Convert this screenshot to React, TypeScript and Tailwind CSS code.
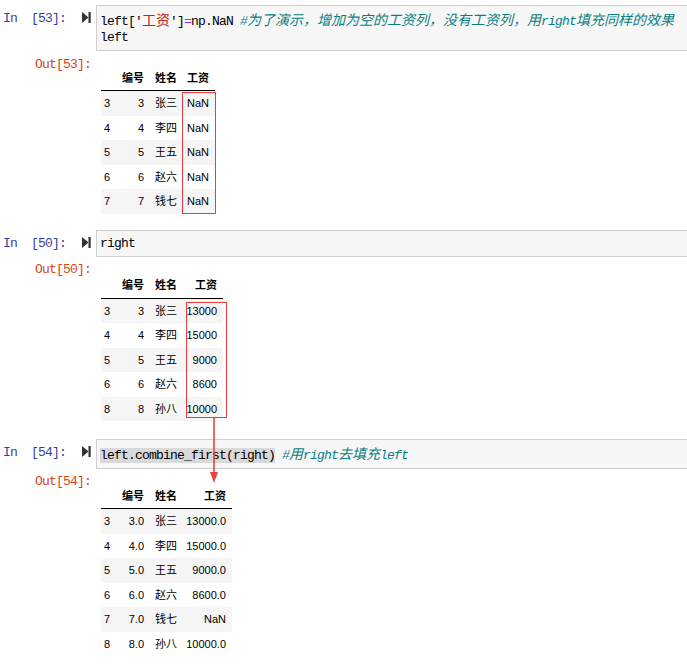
import React from "react";

const mono = { fontFamily: '"Liberation Mono", "Noto Sans CJK SC", monospace' };

// 运行按钮图标（三角 + 竖线）
const RunIcon = () => (
  <svg width="9" height="11" viewBox="0 0 9 11" className="mt-[7px] ml-[82px] shrink-0">
    <polygon points="0,0 6.5,5.5 0,11" fill="#333" />
    <rect x="6.5" y="0" width="2.2" height="11" fill="#333" />
  </svg>
);

const Cjk = ({ children }: { children: React.ReactNode }) => (
  <span className="text-[14px] tracking-normal" style={{ fontFamily: '"Noto Sans CJK SC", sans-serif' }}>
    {children}
  </span>
);

type Row = { idx: string; cells: string[] };

type TableProps = {
  widths: number[];
  headers: string[];
  rows: Row[];
  redBox?: { left: number; top: number; width: number; height: number };
};

const DataFrame = ({ widths, headers, rows, redBox }: TableProps) => {
  const total = widths.reduce((a, b) => a + b, 0);
  return (
    <div
      className="relative text-[11px] text-black"
      style={{ fontFamily: '"Liberation Sans", "Noto Sans CJK SC", sans-serif', width: total }}
    >
      <div className="flex h-[25px] items-center border-b border-black font-bold">
        <div style={{ width: widths[0] }} />
        {headers.map((h, i) => (
          <div key={h} className="pr-[6px] text-right" style={{ width: widths[i + 1] }}>
            {h}
          </div>
        ))}
      </div>
      {rows.map((r, ri) => (
        <div key={r.idx} className={`flex h-[24.5px] items-center ${ri % 2 === 0 ? "bg-[#f5f5f5]" : "bg-white"}`}>
          <div className="pl-[3px]" style={{ width: widths[0] }}>
            {r.idx}
          </div>
          {r.cells.map((c, ci) => (
            <div key={ci} className="pr-[6px] text-right" style={{ width: widths[ci + 1] }}>
              {c}
            </div>
          ))}
        </div>
      ))}
      {redBox && (
        <div
          className="absolute border border-[#ee3b3b]"
          style={{ left: redBox.left, top: redBox.top, width: redBox.width, height: redBox.height }}
        />
      )}
    </div>
  );
};

const InPrompt = ({ n }: { n: number }) => (
  <div className="w-0 shrink-0">
    <div
      className="mt-[6px] ml-[3px] whitespace-pre text-[13px] leading-[16px] tracking-[-0.8px] text-[#303f9f]"
      style={mono}
    >
      {`In  [${n}]:`}
    </div>
  </div>
);

const CodeBox = ({ children }: { children: React.ReactNode }) => (
  <div
    className="ml-[5px] mr-[-2px] flex-1 border border-[#cfcfcf] bg-[#f7f7f7] pl-[3px] pt-[5px] pb-[4px] text-[13px] leading-[16px] tracking-[-0.8px] text-black"
    style={mono}
  >
    {children}
  </div>
);

const OutRow = ({ n, mt, tableMt, children }: { n: number; mt: string; tableMt: string; children: React.ReactNode }) => (
  <div className={`flex items-start ${mt}`}>
    <div
      className="w-[101px] shrink-0 pl-[35px] whitespace-pre text-[13px] leading-[14px] tracking-[-0.8px] text-[#d84315]"
      style={mono}
    >
      {`Out[${n}]:`}
    </div>
    <div className={tableMt}>{children}</div>
  </div>
);

const heads = ["编号", "姓名", "工资"];

export default function App() {
  return (
    <div className="relative h-[664px] w-[687px] overflow-hidden bg-white">
      {/* Cell 53 */}
      <div className="flex items-start pt-[5px]">
        <InPrompt n={53} />
        <RunIcon />
        <CodeBox>
          <div className="whitespace-pre">
            {"left['"}
            <span className="text-[#ba2121]">
              <Cjk>工资</Cjk>
            </span>
            {"']"}
            <span className="text-[#aa22ff]">=</span>
            {"np.NaN "}
            <span className="italic text-[#0b7f7f]">
              #<Cjk>为了演示，增加为空的工资列，没有工资列，用</Cjk>right<Cjk>填充同样的效果</Cjk>
            </span>
          </div>
          <div>left</div>
        </CodeBox>
      </div>
      <OutRow n={53} mt="mt-[7px]" tableMt="mt-[8px]">
        <DataFrame
          widths={[16, 33, 33, 32]}
          headers={heads}
          rows={[
            { idx: "3", cells: ["3", "张三", "NaN"] },
            { idx: "4", cells: ["4", "李四", "NaN"] },
            { idx: "5", cells: ["5", "王五", "NaN"] },
            { idx: "6", cells: ["6", "赵六", "NaN"] },
            { idx: "7", cells: ["7", "钱七", "NaN"] },
          ]}
          redBox={{ left: 81, top: 26, width: 34, height: 122 }}
        />
      </OutRow>

      {/* Cell 50 */}
      <div className="mt-[16px] flex items-start">
        <InPrompt n={50} />
        <RunIcon />
        <CodeBox>
          <div>right</div>
        </CodeBox>
      </div>
      <OutRow n={50} mt="mt-[6px]" tableMt="mt-[11px]">
        <DataFrame
          widths={[16, 33, 33, 40]}
          headers={heads}
          rows={[
            { idx: "3", cells: ["3", "张三", "13000"] },
            { idx: "4", cells: ["4", "李四", "15000"] },
            { idx: "5", cells: ["5", "王五", "9000"] },
            { idx: "6", cells: ["6", "赵六", "8600"] },
            { idx: "8", cells: ["8", "孙八", "10000"] },
          ]}
          redBox={{ left: 85, top: 28, width: 41, height: 116 }}
        />
      </OutRow>

      {/* Cell 54 */}
      <div className="mt-[18px] flex items-start">
        <InPrompt n={54} />
        <RunIcon />
        <CodeBox>
          <div className="whitespace-pre">
            <span className="bg-[#d9d9d9]">left.combine_first(right)</span>{" "}
            <span className="italic text-[#0b7f7f]">
              #<Cjk>用</Cjk>right<Cjk>去填充</Cjk>left
            </span>
          </div>
        </CodeBox>
      </div>
      <OutRow n={54} mt="mt-[6px]" tableMt="mt-[9px]">
        <DataFrame
          widths={[16, 33, 33, 49]}
          headers={heads}
          rows={[
            { idx: "3", cells: ["3.0", "张三", "13000.0"] },
            { idx: "4", cells: ["4.0", "李四", "15000.0"] },
            { idx: "5", cells: ["5.0", "王五", "9000.0"] },
            { idx: "6", cells: ["6.0", "赵六", "8600.0"] },
            { idx: "7", cells: ["7.0", "钱七", "NaN"] },
            { idx: "8", cells: ["8.0", "孙八", "10000.0"] },
          ]}
        />
      </OutRow>

      {/* 红色箭头标注 */}
      <svg className="absolute left-[209px] top-[417px]" width="10" height="67" viewBox="0 0 10 67">
        <line x1="5" y1="0" x2="5" y2="57" stroke="#e8433d" strokeWidth="1.6" />
        <polygon points="1,55 9,55 5,66" fill="#e8433d" />
      </svg>
    </div>
  );
}
